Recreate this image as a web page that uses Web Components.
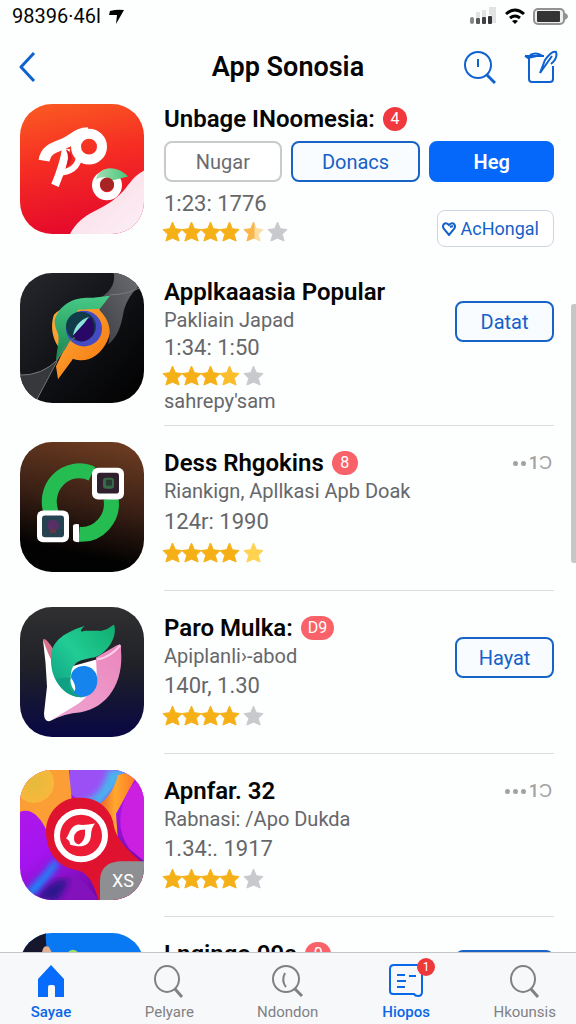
<!DOCTYPE html>
<html lang="id">
<head>
<meta charset="utf-8">
<meta name="viewport" content="width=device-width, initial-scale=1">
<title>App Sonosia</title>
<style>
  html, body { height: 100%; }
  body {
    margin: 0;
    display: flex;
    flex-direction: column;
    overflow: hidden;
    background: #fdfefe;
    color: #050505;
    font-family: Roboto, "Liberation Sans", sans-serif;
  }
</style>
</head>
<body>

<status-bar>98396·46l</status-bar>
<nav-header>App Sonosia</nav-header>

<app-list>
  <app-row variant="featured">
    <svg slot="icon" viewBox="0 0 124 131" preserveAspectRatio="none" aria-hidden="true">
      <defs>
        <linearGradient id="red" x1="0" y1="0" x2="0.2" y2="1"><stop offset="0" stop-color="#fb5c22"/><stop offset=".5" stop-color="#f52c23"/><stop offset="1" stop-color="#e60b2b"/></linearGradient>
        <linearGradient id="sheet" x1="0" y1="0" x2="1" y2="1"><stop offset="0" stop-color="#fbd9e3"/><stop offset="1" stop-color="#fbeff6"/></linearGradient>
        <linearGradient id="mint"><stop offset="0" stop-color="#a4ddb5"/><stop offset="1" stop-color="#45c779"/></linearGradient>
      </defs>
      <rect width="124" height="131" fill="url(#red)"/>
      <path d="M124 67C111 74 109 83 99 92C83 108 62 108 50 131H124Z" fill="url(#sheet)"/>
      <path d="M24 57C26 44 38 43 46 39C54 35 58 29 68 29" fill="none" stroke="#fff" stroke-width="11"/>
      <path d="M46 45Q44 60 35 82" fill="none" stroke="#fff" stroke-width="8"/>
      <path d="M59 48C60 60 54 67 42 69" fill="none" stroke="#fff" stroke-width="6"/>
      <path d="M47 46Q57 54 46 64Q50 54 46 46Z" fill="#d91623"/>
      <circle cx="69" cy="43" r="13" fill="none" stroke="#fff" stroke-width="10"/>
      <circle cx="87" cy="82" r="11" fill="none" stroke="#fff" stroke-width="8"/>
      <path d="M76 76C79 62 97 61 108 73L92 77C88 73 82 73 76 76Z" fill="url(#mint)"/>
      <circle cx="87" cy="81" r="7" fill="#a82424"/>
    </svg>
    <span slot="title">Unbage INoomesia:</span>
    <count-badge slot="badge" tone="strong">4</count-badge>
    <action-button slot="filters" tone="muted">Nugar</action-button>
    <action-button slot="filters">Donacs</action-button>
    <action-button slot="filters" tone="solid">Heg</action-button>
    <span slot="meta">1:23: 1776</span>
    <star-rating slot="stars" value="ffffhe"></star-rating>
    <action-button slot="side" tone="soft" heart>AcHongal</action-button>
  </app-row>

  <app-row variant="compact">
    <svg slot="icon" viewBox="0 0 124 131" preserveAspectRatio="none" aria-hidden="true">
      <defs>
        <linearGradient id="ink" x1="0" y1="0" x2="1" y2="1"><stop offset="0" stop-color="#26282d"/><stop offset=".5" stop-color="#111216"/><stop offset="1" stop-color="#000"/></linearGradient>
        <linearGradient id="glass" x1="0" y1="1" x2="1" y2="0"><stop offset="0" stop-color="#3b3d42"/><stop offset="1" stop-color="#6b6d72"/></linearGradient>
        <linearGradient id="flame" x1="0" y1="0" x2="1" y2="1"><stop offset="0" stop-color="#ffad3d"/><stop offset="1" stop-color="#f5750a"/></linearGradient>
        <linearGradient id="leaf" x1="0" y1="0" x2="0" y2="1"><stop offset="0" stop-color="#47ca88"/><stop offset="1" stop-color="#17834a"/></linearGradient>
      </defs>
      <rect width="124" height="131" fill="url(#ink)"/>
      <path d="M0 103Q21 103 37 88L15 131H0Z" fill="#36383c"/>
      <path d="M34 42C45 30 74 30 88 37C98 55 84 89 60 88C55 88 53 85 52 88L38 107L36 94L43 79C32 70 30 53 34 42Z" fill="url(#flame)"/>
      <path d="M94 0H113Q116 8 120 12Q108 23 104 37C101 54 98 64 88 72Q94 52 80 38L76 28C91 19 95 12 94 0Z" fill="url(#glass)"/>
      <path d="M35 46C42 28 58 24 73 25L90 23L80 36L58 37L50 68C46 77 41 82 36 90C36 79 40 70 38 61C35 54 34 50 35 46Z" fill="url(#leaf)"/>
      <circle cx="64" cy="56" r="18" fill="#454bc3"/>
      <circle cx="61" cy="54" r="15" fill="#103c49"/>
      <path d="M53 64Q59 48 71 45Q79 59 68 67Q60 72 53 64Z" fill="#280765"/>
      <path d="M53 63Q55 49 69 44L64 51Z" fill="#8ce2dd"/>
      <path d="M0 103Q22 103 37 88Q45 70 55 65M15 131L37 89M122 14Q106 22 90 22" fill="none" stroke="#77797c"/>
    </svg>
    <span slot="title">Applkaaasia Popular</span>
    <span slot="subtitle">Pakliain Japad</span>
    <span slot="meta">1:34: 1:50</span>
    <star-rating slot="stars" value="fffme"></star-rating>
    <span slot="note">sahrepy'sam</span>
    <action-button slot="side">Datat</action-button>
  </app-row>

  <app-row variant="roomy">
    <svg slot="icon" viewBox="0 0 124 131" preserveAspectRatio="none" aria-hidden="true">
      <defs>
        <linearGradient id="cocoa" x1=".6" y1="0" x2=".4" y2="1"><stop offset="0" stop-color="#693a20"/><stop offset=".45" stop-color="#3a2015"/><stop offset=".85" stop-color="#030202"/></linearGradient>
      </defs>
      <rect width="124" height="131" fill="url(#cocoa)"/>
      <path d="M32 73A30 31 0 0 1 72 32M91 57A30 31 0 0 1 59 93" fill="none" stroke="#25bc51" stroke-width="15"/>
      <path d="M53 85Q53 82 59 83V101Q53 101 53 98Z" fill="#fff"/>
      <rect x="72" y="26" width="32" height="32" rx="6" fill="#fff"/>
      <rect x="77" y="31" width="22" height="21" rx="3" fill="#30202e"/>
      <rect x="83" y="36" width="11" height="11" rx="3" fill="#386a48"/>
      <rect x="86" y="38" width="6" height="6" rx="1" fill="#263b34"/>
      <rect x="17" y="69" width="32" height="32" rx="6" fill="#fff"/>
      <rect x="22" y="74" width="22" height="22" rx="3" fill="#264351"/>
      <circle cx="33" cy="84" r="6" fill="#563064"/>
      <path d="M30 88h6v4h-6z" fill="#653743"/>
    </svg>
    <span slot="title">Dess Rhgokins</span>
    <count-badge slot="badge">8</count-badge>
    <span slot="subtitle">Riankign, Apllkasi Apb Doak</span>
    <span slot="meta">124r: 1990</span>
    <star-rating slot="stars" value="ffffl"></star-rating>
    <more-count slot="side" dots="2">1Ɔ</more-count>
  </app-row>

  <app-row>
    <svg slot="icon" viewBox="0 0 124 131" preserveAspectRatio="none" aria-hidden="true">
      <defs>
        <linearGradient id="night" x1="0" y1="0" x2="0" y2="1"><stop offset="0" stop-color="#303032"/><stop offset=".45" stop-color="#202127"/><stop offset="1" stop-color="#080744"/></linearGradient>
        <linearGradient id="jade" x1="1" y1="0" x2="0" y2="1"><stop offset="0" stop-color="#10ad6f"/><stop offset=".5" stop-color="#21cc94"/><stop offset="1" stop-color="#0c9a82"/></linearGradient>
        <linearGradient id="pink" x1="1" y1="0" x2="0" y2="1"><stop offset="0" stop-color="#ea86bd"/><stop offset="1" stop-color="#f0a7d2"/></linearGradient>
      </defs>
      <rect width="124" height="131" fill="url(#night)"/>
      <path d="M23 33Q25 29 35 45L29 60Z" fill="#da718b"/>
      <path d="M23 33C28 47 31 54 37 64L80 52L99 38C102 37 101 43 100 50L89 83Q77 99 62 105Q45 106 30 115Q24 116 24 107L27 80Q26 56 23 33Z" fill="#fff"/>
      <path d="M76 51L96 39Q102 36 101 43C104 77 87 101 61 106Q44 107 30 115L59 97Q70 89 77 73Z" fill="url(#pink)"/>
      <path d="M77 53Q90 51 100 39" fill="none" stroke="#ffd2e9" stroke-width="2"/>
      <path d="M65 19C59 24 60 26 65 24H78C87 25 92 18 94 18C98 29 88 47 74 51C61 53 52 55 51 68Q48 81 61 91C42 89 30 72 31 51C31 33 47 25 65 19Z" fill="url(#jade)"/>
      <path d="M51 71C51 58 70 55 76 67C82 83 67 97 50 88Q60 85 51 71Z" fill="#1584ec"/>
      <path d="M51 71Q44 85 64 91Q43 91 36 72Z" fill="#119f84"/>
    </svg>
    <span slot="title">Paro Mulka:</span>
    <count-badge slot="badge" wide>D9</count-badge>
    <span slot="subtitle">Apiplanli›-abod</span>
    <span slot="meta">140r, 1.30</span>
    <star-rating slot="stars" value="ffffe"></star-rating>
    <action-button slot="side">Hayat</action-button>
  </app-row>

  <app-row>
    <svg slot="icon" viewBox="0 0 124 131" preserveAspectRatio="none" aria-hidden="true">
      <defs>
        <linearGradient id="violet" x1="0" y1="0" x2=".6" y2="1"><stop offset="0" stop-color="#b719e7"/><stop offset=".55" stop-color="#a414ef"/><stop offset="1" stop-color="#6c0aa0"/></linearGradient>
        <linearGradient id="heat" x1="0" y1="0" x2="1" y2="0"><stop offset="0" stop-color="#e2352c"/><stop offset=".5" stop-color="#ffa92d"/><stop offset="1" stop-color="#ff6b25"/></linearGradient>
        <radialGradient id="amber"><stop offset="0" stop-color="#e5ba3d"/><stop offset="1" stop-color="#f8b83c"/></radialGradient>
        <filter id="melt"><feGaussianBlur stdDeviation="3"/></filter>
      </defs>
      <rect width="124" height="131" fill="url(#violet)"/>
      <path d="M50 0H110L86 25L62 32L50 24Z" fill="#9a50f5"/>
      <path d="M88 0L112 -3L80 38L60 32Q82 28 88 0Z" fill="#4ab4ee" filter="url(#melt)"/>
      <path d="M98 5L120 0L96 44L98 72L70 39Q91 32 98 5Z" fill="url(#heat)"/>
      <path d="M0 0H49L52 34L28 64Q16 36 0 42Z" fill="#fb9e35"/>
      <circle cx="14" cy="13" r="20" fill="url(#amber)"/>
      <path d="M110 18Q91 53 109 79L124 92V4Z" fill="#cb1fe2"/>
      <path d="M39 96L16 126H2L24 103L35 89Z" fill="#1489fb" filter="url(#melt)"/>
      <path d="M42 106Q62 104 78 131H20Q31 112 42 106Z" fill="#8312bd"/>
      <path d="M16 131Q31 108 49 111L38 131Z" fill="#29148d" filter="url(#melt)"/>
      <path d="M58 28C80 26 93 43 94 57Q97 73 123 94V131H78Q72 104 57 101C38 98 26 83 26 62C26 44 40 28 58 28Z" fill="#df1230"/>
      <circle cx="61" cy="66" r="24" fill="#ec1b36" stroke="#fff" stroke-width="6"/>
      <path d="M75 54Q64 56 58 55C49 57 50 65 46 69Q50 71 50 75C58 78 70 79 71 66Q71 59 75 54Z" fill="#fff"/>
      <path d="M65 60Q54 60 54 69Q54 74 59 75Q66 71 65 60Z" fill="#ec1b36"/>
      <path d="M80 131V112C80 98 89 92 102 92H124V131Z" fill="#8e8f92"/>
      <text x="92" y="118" font-size="18" fill="#fff">XS</text>
    </svg>
    <span slot="title">Apnfar. 32</span>
    <span slot="subtitle">Rabnasi: /Apo Dukda</span>
    <span slot="meta">1.34:. 1917</span>
    <star-rating slot="stars" value="ffffe"></star-rating>
    <more-count slot="side" dots="3">1Ɔ</more-count>
  </app-row>

  <app-row>
    <svg slot="icon" viewBox="0 0 124 131" preserveAspectRatio="none" aria-hidden="true">
      <rect width="124" height="131" fill="#0879f3"/>
      <path d="M0 0H26Q24 16 36 40H0Z" fill="#16172c"/>
      <path d="M22 20Q23 11 29 14L35 26H20Z" fill="#e3b092"/>
      <circle cx="53" cy="23" r="6" fill="#9ee15a"/>
    </svg>
    <span slot="title">Lngingo 09a</span>
    <count-badge slot="badge">0</count-badge>
    <action-button slot="side" raised></action-button>
  </app-row>
</app-list>

<tab-bar>
  <tab-item icon="home" active>Sayae</tab-item>
  <tab-item icon="search">Pelyare</tab-item>
  <tab-item icon="clock">Ndondon</tab-item>
  <tab-item icon="news" active badge="1">Hiopos</tab-item>
  <tab-item icon="search">Hkounsis</tab-item>
</tab-bar>

<script>
class StatusBar extends HTMLElement {
  constructor() {
    super();
    this.attachShadow({mode: 'open'}).innerHTML = `
      <style>
        :host {
          display: flex;
          flex: none;
          align-items: center;
          justify-content: space-between;
          height: 32px;
          padding: 0 8px 0 12px;
          font-size: 20px;
        }
        div { display: flex; align-items: center; gap: 8px; }
        svg { display: block; }
      </style>
      <div>
        <slot></slot>
        <svg width="15" height="15" viewBox="0 0 15 15"><path d="M1 2Q8 0 15 1L7 15L8 6L0 6Z"/></svg>
      </div>
      <div>
        <svg width="27" height="18" viewBox="0 0 27 18">
          <path d="M6 5h4v6H6zM12 3h4v7h-4zM19 0h7v16h-5V8h-2z" fill="#e2e2e3"/>
          <rect y="10" width="4" height="7" rx="2" fill="#87888a"/>
          <rect x="6" y="11" width="4" height="6" rx="1" fill="#58595b"/>
          <rect x="12" y="10" width="4" height="7" rx="1" fill="#414244"/>
          <rect x="18" y="9" width="4" height="8" rx="1" fill="#353638"/>
        </svg>
        <svg width="20" height="17" viewBox="0 0 20 17" fill="none" stroke="#000" stroke-width="3">
          <path d="M1 6Q10-2 19 6M5 10Q10 6 15 10"/><path d="M7 13Q10 11 13 13L10 16Z" fill="#000" stroke="none"/>
        </svg>
        <svg width="35" height="17" viewBox="0 0 35 17">
          <rect x="1" y="1" width="30" height="15" rx="4" fill="#eee" stroke="#929293" stroke-width="2"/>
          <rect x="4" y="3" width="23" height="11" rx="1" fill="#343435"/>
          <path d="M32 5Q35 6 35 9Q34 11 32 12Z" fill="#929293"/>
        </svg>
      </div>
    `;
  }
}

class NavHeader extends HTMLElement {
  constructor() {
    super();
    this.attachShadow({mode: 'open'}).innerHTML = `
      <style>
        :host {
          display: grid;
          flex: none;
          grid-template-columns: 1fr auto 1fr;
          align-items: center;
          height: 42px;
          padding: 14px 18px 0;
        }
        h1 { margin: 0; font-size: 27px; font-weight: 600; line-height: 42px; }
        button { display: block; padding: 0; border: 0; background: none; color: #0f62cf; }
        svg { display: block; fill: none; stroke: currentColor; stroke-width: 2; }
        .tools { display: flex; justify-content: flex-end; gap: 28px; }
      </style>
      <button aria-label="Back"><svg width="20" height="32" viewBox="0 0 20 32" stroke-linejoin="round"><path d="M16 2L3 16L16 30" style="stroke-width: 3"/></svg></button>
      <h1><slot></slot></h1>
      <div class="tools">
        <button aria-label="Search"><svg width="32" height="34" viewBox="0 0 32 34"><circle cx="14" cy="15" r="13"/><path d="M23 25L31 33" stroke-width="3"/><path d="M14 9V17"/></svg></button>
        <button aria-label="Compose"><svg width="34" height="34" viewBox="0 0 34 34">
          <path d="M5 7V29Q5 32 8 32H26Q29 32 29 29V16M1 6H20"/>
          <path d="M1 6L4 8L17 5Q12 2 6 5"/>
          <path d="M16 23L21 10Q28 0 32 2Q34 8 27 14M16 23L28 6"/>
        </svg></button>
      </div>
    `;
  }
}

class AppList extends HTMLElement {
  constructor() {
    super();
    this.attachShadow({mode: 'open'}).innerHTML = `
      <style>
        :host { display: block; position: relative; flex: 1; min-height: 0; overflow: hidden; }
        /* scroll thumb, floats over the rows */
        .thumb {
          position: absolute;
          top: 25%;
          right: 0;
          width: 5px;
          height: 30%;
          border-radius: 3px 0 0 3px;
          background: #c4c6c7;
        }
      </style>
      <slot></slot>
      <div class="thumb"></div>
    `;
  }
}

class AppRow extends HTMLElement {
  constructor() {
    super();
    this.attachShadow({mode: 'open'}).innerHTML = `
      <style>
        :host { display: flex; gap: 20px; padding: 16px 22px 0 20px; --meta: 32px; --top: 7px; --bottom: 25px; }
        :host([variant="roomy"]) { --meta: 34px; }
        :host([variant="compact"]) { --meta: 28px; --top: 5px; --bottom: 11px; }
        :host([variant="featured"]) { --meta: 28px; --top: 1px; --bottom: 10px; }
        ::slotted(svg) { display: block; flex: none; width: 124px; height: 130px; border-radius: 32px; }
        .body {
          flex: 1;
          min-width: 0;
          padding: var(--top) 0 var(--bottom);
          border-bottom: 1px solid #dcdddf;
        }
        :host([variant="featured"]) .body { border: 0; }
        .heading { display: flex; align-items: center; gap: 8px; height: 28px; }
        h2 { margin: 0; font-size: 24px; font-weight: 600; line-height: 28px; white-space: nowrap; }
        .filters { display: grid; grid-template-columns: 118fr 130fr 125fr; gap: 9px; padding: 8px 0; }
        .main { display: flex; justify-content: space-between; }
        .info { color: #66676a; font-size: 20px; font-weight: 400; white-space: nowrap; }
        .subtitle, .meta, .note { display: block; line-height: 28px; }
        .meta { font-size: 22px; line-height: var(--meta); }
        .note { line-height: 26px; }
        .side { flex: none; }
        :host([variant="featured"]) .side { padding-top: 20px; }
      </style>
      <slot name="icon"></slot>
      <div class="body">
        <div class="heading"><h2><slot name="title"></slot></h2><slot name="badge"></slot></div>
        <div class="extra"></div>
        <div class="main">
          <div class="info"></div>
          <div class="side"><slot name="side"></slot></div>
        </div>
      </div>
    `;
  }

  connectedCallback() {
    var info = this.shadowRoot.querySelector('.info');
    if (this.getAttribute('variant') == 'featured') {
      this.shadowRoot.querySelector('.extra').innerHTML = '<div class="filters"><slot name="filters"></slot></div>';
    }
    // only the lines that the row has been given take up space
    info.innerHTML = ['subtitle', 'meta', 'stars', 'note']
      .filter(name => this.querySelector(`[slot="${name}"]`))
      .map(name => `<div class="${name}"><slot name="${name}"></slot></div>`)
      .join('');
  }
}

class CountBadge extends HTMLElement {
  constructor() {
    super();
    this.attachShadow({mode: 'open'}).innerHTML = `
      <style>
        :host {
          display: block;
          box-sizing: border-box;
          min-width: 26px;
          padding: 0 5px;
          border-radius: 12px;
          background: #fa626a;
          color: #fff;
          font-size: 16px;
          line-height: 24px;
          text-align: center;
        }
        :host([tone="strong"]) { min-width: 24px; background: #f0383d; }
        :host([wide]) { padding: 0 7px; }
      </style>
      <slot></slot>
    `;
  }
}

class ActionButton extends HTMLElement {
  constructor() {
    super();
    this.attachShadow({mode: 'open'}).innerHTML = `
      <style>
        :host { display: block; --line: #1763c6; --ink: #1461c8; --fill: #f9fcff; }
        :host([tone="muted"]) { --line: #c9cacc; --ink: #6b6c6f; --fill: #fff; }
        :host([tone="solid"]) { --line: #0568fa; --ink: #fff; --fill: #0568fa; }
        :host([tone="soft"]) { --line: #ced5e2; --fill: #fff; }
        button {
          display: flex;
          align-items: center;
          justify-content: center;
          gap: 5px;
          box-sizing: border-box;
          width: 100%;
          height: 41px;
          padding: 0;
          border: 2px solid var(--line);
          border-radius: 8px;
          background: var(--fill);
          color: var(--ink);
          font: 400 20px Roboto, sans-serif;
        }
        :host([tone="solid"]) button { font-weight: 600; }
        :host([tone="soft"]) button { width: auto; height: 37px; padding: 0 14px 0 4px; border-width: 1px; font-size: 18px; }
        :host([slot="side"]:not([tone])) button { width: 99px; }
        /* side buttons reach up beside the heading */
        :host([slot="side"]:not([tone])) { margin-top: -5px; }
        :host([slot="side"][raised]:not([tone])) { margin-top: -18px; }
        svg { display: none; fill: none; stroke: currentColor; stroke-width: 2; }
        :host([heart]) svg { display: block; }
      </style>
      <button><svg width="14" height="14" viewBox="0 0 14 14"><path d="M2 2Q4 0 7 3Q10 0 12 2Q14 4 12 7L7 13L2 7Q0 4 2 2ZM8 5L11 4"/></svg><slot></slot></button>
    `;
  }
}

class MoreCount extends HTMLElement {
  constructor() {
    super();
    this.attachShadow({mode: 'open'});
  }

  connectedCallback() {
    var dots = '<i></i>'.repeat(parseInt(this.getAttribute('dots')));
    this.shadowRoot.innerHTML = `
      <style>
        /* sits on the heading line */
        :host { display: block; margin-top: -28px; }
        button {
          display: flex;
          align-items: center;
          gap: 3px;
          padding: 0 2px 0 0;
          border: 0;
          background: none;
          color: #a0a1a4;
          font: 500 18px/28px Roboto, sans-serif;
        }
        i { width: 5px; height: 5px; border-radius: 50%; background: currentColor; }
      </style>
      <button>${dots}<slot></slot></button>
    `;
  }
}

class StarRating extends HTMLElement {
  constructor() {
    super();
    this.attachShadow({mode: 'open'});
  }

  connectedCallback() {
    var value = this.getAttribute('value');
    var fills = {f: '#f4b016', m: '#fabd2c', l: '#ffd250', h: 'url(#half)', e: '#c8c9cc'};
    var shape = 'M10 0L13 7L20 8L15 13L17 20L10 17L3 20L5 13L0 8L7 7Z';
    var stars = value.split('').map(function(key) {
      return `<svg class="${key}" viewBox="0 0 20 20">
        <linearGradient id="half"><stop offset=".5" stop-color="#f8b64b"/><stop offset=".6" stop-color="#fbdda0"/></linearGradient>
        <path d="${shape}" fill="${fills[key]}" stroke="${fills[key]}" stroke-linejoin="round"/></svg>`;
    }).join('');
    this.shadowRoot.innerHTML = `
      <style>
        :host { display: flex; align-items: center; height: 26px; margin-left: -1px; }
        svg { width: 19px; height: 21px; overflow: visible; }
        .e, .l, .h { margin-left: 5px; }
      </style>
      ${stars}
    `;
    this.setAttribute('role', 'img');
  }
}

class TabBar extends HTMLElement {
  constructor() {
    super();
    this.attachShadow({mode: 'open'}).innerHTML = `
      <style>
        :host { display: block; flex: none; border-top: 1px solid #c3c4c6; background: #f7f8fa; }
        nav { display: flex; justify-content: space-between; height: 71px; padding: 0 20px; }
      </style>
      <nav><slot></slot></nav>
    `;
  }
}

class TabItem extends HTMLElement {
  constructor() {
    super();
    this.attachShadow({mode: 'open'});
  }

  connectedCallback() {
    var badge = this.getAttribute('badge');
    this.shadowRoot.innerHTML = `
      <style>
        :host { display: block; min-width: 62px; color: #808184; }
        :host([active]) { color: #0868e8; }
        a {
          display: flex;
          flex-direction: column;
          align-items: center;
          gap: 3px;
          padding-top: 10px;
          color: inherit;
          font-size: 15px;
          line-height: 20px;
          text-decoration: none;
        }
        :host([active]) a { font-weight: 500; }
        .icon { position: relative; }
        svg { display: block; width: 36px; height: 36px; fill: none; stroke: currentColor; stroke-width: 2; }
        .badge {
          position: absolute;
          top: -5px;
          right: -11px;
          width: 18px;
          border-radius: 9px;
          background: #ee393b;
          color: #fff;
          font-size: 12px;
          font-weight: 400;
          line-height: 18px;
          text-align: center;
        }
      </style>
      <a href="#">
        <span class="icon">
          <svg viewBox="0 0 36 36">${this.icons()[this.getAttribute('icon')]}</svg>
          ${badge ? `<span class="badge">${badge}</span>` : ''}
        </span>
        <slot></slot>
      </a>
    `;
  }

  icons() {
    return {
      home: '<path d="M18 2L31 16V34H22V24Q22 22 20 22H17Q15 22 15 24V34H5V16Z" fill="#076bfb" stroke="none"/>',
      search: '<ellipse cx="16" cy="16" rx="12" ry="13"/><path d="M24 26L31 34" stroke-width="3"/>',
      clock: '<ellipse cx="16" cy="16" rx="13" ry="13"/><path d="M25 26L32 33" stroke-width="3"/><path d="M15 10Q11 18 16 24"/>',
      news: '<path d="M6 2H31Q34 2 34 5V29Q34 33 30 33Q27 33 26 31H5Q2 31 2 28V6Q2 2 6 2Z"/><path d="M9 12H17M21 13H28M9 18H18M9 24H17"/>'
    };
  }
}

customElements.define('status-bar', StatusBar);
customElements.define('nav-header', NavHeader);
customElements.define('app-list', AppList);
customElements.define('app-row', AppRow);
customElements.define('count-badge', CountBadge);
customElements.define('action-button', ActionButton);
customElements.define('more-count', MoreCount);
customElements.define('star-rating', StarRating);
customElements.define('tab-bar', TabBar);
customElements.define('tab-item', TabItem);
</script>
</body>
</html>
